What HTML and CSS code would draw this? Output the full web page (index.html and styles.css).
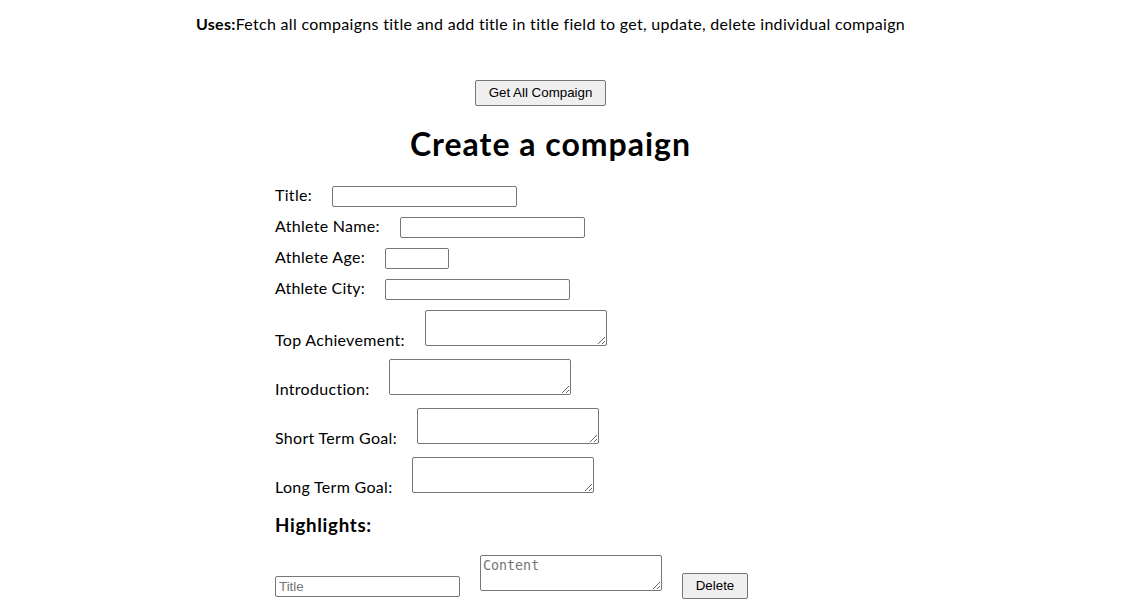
FILE: index.html
```html
<!DOCTYPE html>
<html lang="en">
<head>
<meta charset="utf-8">
<title>Create a compaign</title>
<link rel="stylesheet" href="styles.css">
</head>
<body>
<div class="page">
  <p class="intro"><b>Uses:</b>Fetch all compaigns title and add title in title field to get, update, delete individual compaign</p>
  <div class="toolbar">
    <button class="btn btn--fetch" type="button">Get All Compaign</button>
  </div>
  <h1 class="title">Create a compaign</h1>
  <form class="form">
    <div class="row">
      <label class="label">Title:</label>
      <input class="field" type="text">
    </div>
    <div class="row">
      <label class="label">Athlete Name:</label>
      <input class="field" type="text">
    </div>
    <div class="row">
      <label class="label">Athlete Age:</label>
      <input class="field field--short" type="text">
    </div>
    <div class="row">
      <label class="label label--tight">Athlete City:</label>
      <input class="field" type="text">
    </div>
    <div class="row row--area">
      <label class="label">Top Achievement:</label>
      <textarea class="area"></textarea>
    </div>
    <div class="row row--area">
      <label class="label">Introduction:</label>
      <textarea class="area"></textarea>
    </div>
    <div class="row row--area">
      <label class="label">Short Term Goal:</label>
      <textarea class="area"></textarea>
    </div>
    <div class="row row--area">
      <label class="label">Long Term Goal:</label>
      <textarea class="area"></textarea>
    </div>
    <h3 class="subtitle">Highlights:</h3>
    <div class="highlight">
      <input class="field field--hl" type="text" placeholder="Title">
      <textarea class="area area--hl" placeholder="Content"></textarea>
      <button class="btn btn--delete" type="button">Delete</button>
    </div>
  </form>
</div>
</body>
</html>
```

FILE: styles.css
```css
html, body {
  margin: 0;
  padding: 0;
  background: #ffffff;
}

body {
  font-family: "Lato", "Open Sans", sans-serif;
  font-size: 16px;
  letter-spacing: 0.3px;
  color: #000000;
}

.page {
  width: 1101px;
  padding-top: 15px;
}

.intro {
  margin: 0;
  text-align: center;
  line-height: 18px;
}

.intro b {
  font-weight: 700;
}

.toolbar {
  display: flex;
  justify-content: center;
  margin-top: 47px;
}

.btn {
  font-family: "Liberation Sans", Arial, sans-serif;
  font-size: 13.333px;
  letter-spacing: normal;
  color: #000000;
  background: #efefef;
  border: 1px solid #767676;
  border-radius: 2px;
  height: 26px;
  line-height: 24px;
  padding: 0 13px;
  box-sizing: border-box;
}

.btn--fetch {
  margin-right: 20px;
}

.btn--delete {
  padding: 0 12px;
  width: 66px;
}

.title {
  margin: 19px 0 0;
  text-align: center;
  font-size: 32px;
  line-height: 38px;
  font-weight: 700;
  letter-spacing: 1px;
}

.form {
  width: 551px;
  margin: 23px auto 0;
}

.row {
  display: flex;
  align-items: flex-end;
  gap: 20px;
  margin-bottom: 10px;
}

.row--area {
  margin-bottom: 13px;
}

.label {
  line-height: 18px;
  margin-bottom: 3px;
}

.label--tight {
  letter-spacing: 0.15px;
}

.row--area .label {
  margin-bottom: -3px;
}

.field {
  width: 185px;
  height: 21px;
  box-sizing: border-box;
  border: 1px solid #767676;
  border-radius: 2px;
  padding: 1px 3px;
  font-family: "Liberation Sans", Arial, sans-serif;
  font-size: 13.333px;
  letter-spacing: normal;
  background: #ffffff;
}

.field--short {
  width: 64px;
}

.area {
  width: 182px;
  height: 36px;
  box-sizing: border-box;
  border: 1px solid #767676;
  border-radius: 2px;
  padding: 2px;
  font-family: "DejaVu Sans Mono", monospace;
  font-size: 13.333px;
  letter-spacing: normal;
  background: #ffffff;
  margin: 0;
}

.field::placeholder,
.area::placeholder {
  color: #757575;
}

.subtitle {
  margin: 21px 0 0;
  font-size: 18.72px;
  line-height: 22px;
  font-weight: 700;
  letter-spacing: 0.7px;
}

.highlight {
  display: flex;
  align-items: flex-end;
  gap: 20px;
  margin-top: 19px;
}

.field--hl {
  margin-bottom: 2px;
}

.area--hl {
  margin-bottom: 8px;
}
```
